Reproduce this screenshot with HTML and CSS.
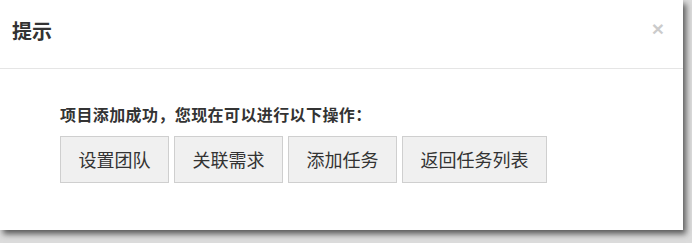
FILE: index.html
```html
<!DOCTYPE html>
<html lang="zh-CN">
<head>
<meta charset="utf-8">
<title>提示</title>
<link rel="stylesheet" href="styles.css">
</head>
<body>
<div class="modal">
  <div class="modal-header">
    <h4 class="modal-title">提示</h4>
    <span class="close">×</span>
  </div>
  <div class="modal-body">
    <p class="message">项目添加成功，您现在可以进行以下操作：</p>
    <div class="actions">
      <button class="btn">设置团队</button>
      <button class="btn">关联需求</button>
      <button class="btn">添加任务</button>
      <button class="btn">返回任务列表</button>
    </div>
  </div>
</div>
</body>
</html>
```

FILE: styles.css
```css
html, body {
  margin: 0;
  padding: 0;
}
body {
  width: 692px;
  height: 243px;
  background: #dcdcdc;
  font-family: "Noto Sans CJK SC", "Microsoft YaHei", sans-serif;
  color: #333;
  overflow: hidden;
}
.modal {
  width: 683px;
  height: 230px;
  background: #fff;
  box-shadow: 3px 4px 6px rgba(0, 0, 0, 0.6);
  box-sizing: border-box;
}
.modal-header {
  display: flex;
  justify-content: space-between;
  align-items: flex-start;
  padding: 17px 19px 23px 12px;
  border-bottom: 1px solid #e5e5e5;
}
.modal-title {
  margin: 0;
  font-size: 20px;
  line-height: 28px;
  font-weight: bold;
  color: #333;
}
.close {
  font-family: "Liberation Sans", Arial, sans-serif;
  font-size: 21px;
  font-weight: bold;
  line-height: 21px;
  color: #000;
  opacity: 0.2;
  margin-top: 1px;
}
.modal-body {
  padding: 34px 20px 0 60px;
}
.message {
  margin: 0;
  font-size: 16px;
  line-height: 22px;
  font-weight: bold;
  letter-spacing: 0.4px;
  color: #333;
}
.actions {
  display: flex;
  gap: 5px;
  margin-top: 11px;
}
.btn {
  font-family: "Noto Sans CJK SC", "Microsoft YaHei", sans-serif;
  font-size: 18px;
  line-height: 25px;
  padding: 10px 17.5px;
  color: #333;
  background: #f0f0f0;
  border: 1px solid #cfcfcf;
  border-radius: 0;
  margin: 0;
}
```
